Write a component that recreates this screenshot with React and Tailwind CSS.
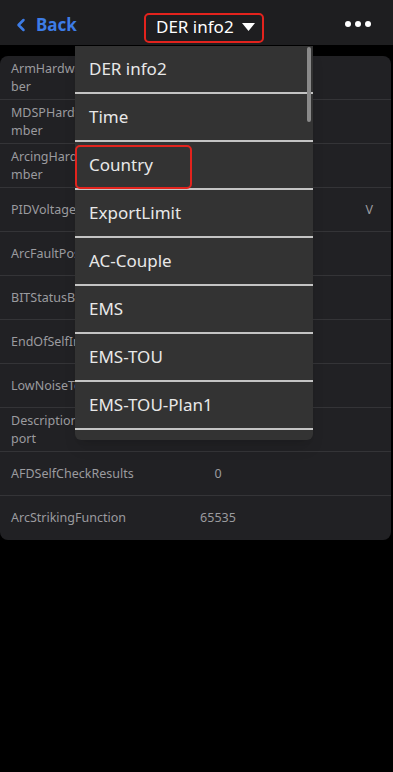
import { ChevronLeft } from 'lucide-react'

const rows = [
  { label: ['ArmHardwareVersionNum', 'ber'], value: '' },
  { label: ['MDSPHardwareVersionNu', 'mber'], value: '' },
  { label: ['ArcingHardwareVersionNu', 'mber'], value: '' },
  { label: ['PIDVoltage'], value: '', unit: 'V' },
  { label: ['ArcFaultPosition'], value: '' },
  { label: ['BITStatusBits'], value: '' },
  { label: ['EndOfSelfInspection'], value: '' },
  { label: ['LowNoiseTest'], value: '' },
  { label: ['DescriptionOfTheRe', 'port'], value: '' },
  { label: ['AFDSelfCheckResults'], value: '0' },
  { label: ['ArcStrikingFunction'], value: '65535' },
]

const menu = ['DER info2', 'Time', 'Country', 'ExportLimit', 'AC-Couple', 'EMS', 'EMS-TOU', 'EMS-TOU-Plan1', '']

export default function App() {
  return (
    <div className="relative w-[393px] h-[772px] bg-black overflow-hidden" style={{ fontFamily: '"Noto Sans", Roboto, sans-serif' }}>
      <header className="h-[45px] bg-[#1e1e20] flex items-center pl-3 pr-3 pt-[5px] relative">
        <div className="flex items-center text-[#3d7ce6] font-bold text-[17px]">
          <ChevronLeft size={20} strokeWidth={3} className="-ml-[1px] mr-[5px]" />
          <span>Back</span>
        </div>
        <div className="absolute left-[144px] top-[13px] w-[120px] h-[30px] border-2 border-[#e3231d] rounded-[5px] flex items-center pl-[10px] text-white text-[17px]">
          <span className="-mt-[2px]">DER info2</span>
          <svg width="13" height="8" viewBox="0 0 13 8" className="ml-[8px] mt-[-3px]">
            <path d="M0 0 H13 L6.5 8 Z" fill="#fff" />
          </svg>
        </div>
        <div className="ml-auto flex gap-[4px] mr-[10px] -mt-[3px]">
          <span className="w-[6px] h-[6px] rounded-full bg-white" />
          <span className="w-[6px] h-[6px] rounded-full bg-white" />
          <span className="w-[6px] h-[6px] rounded-full bg-white" />
        </div>
      </header>

      <div className="mt-[11px] w-[391px] bg-[#212124] rounded-[8px]">
        {rows.map((r, i) => (
          <div key={i} className={`h-[44px] flex items-center text-[12.5px] text-[#9b9b9f] leading-[18px] ${i < rows.length - 1 ? 'border-b border-[#343437]' : ''}`}>
            <div className="w-[180px] pl-[11px] whitespace-nowrap overflow-hidden">
              {r.label.map((l, j) => (
                <div key={j}>{l}</div>
              ))}
            </div>
            <div className="w-[76px] text-center">{r.value}</div>
            <div className="flex-1 text-right pr-[18px]">{r.unit}</div>
          </div>
        ))}
      </div>

      <div className="absolute left-[75px] top-[46px] w-[238px] h-[394px] bg-[#333333] rounded-b-[6px] shadow-lg overflow-hidden">
        {menu.map((m, i) => (
          <div key={i} className={`h-[48px] flex items-center pl-[14px] text-[17px] text-[#e8e8e8] ${i < menu.length - 1 ? 'border-b-2 border-[#c4c4c4]' : ''}`}>
            {m}
          </div>
        ))}
        <div className="absolute right-[2px] top-[1px] w-[4px] h-[75px] bg-[#8a8a8a] rounded-sm" />
        <div className="absolute left-0 top-[99px] w-[117px] h-[44px] border-2 border-[#e3231d] rounded-[5px]" />
      </div>
    </div>
  )
}
